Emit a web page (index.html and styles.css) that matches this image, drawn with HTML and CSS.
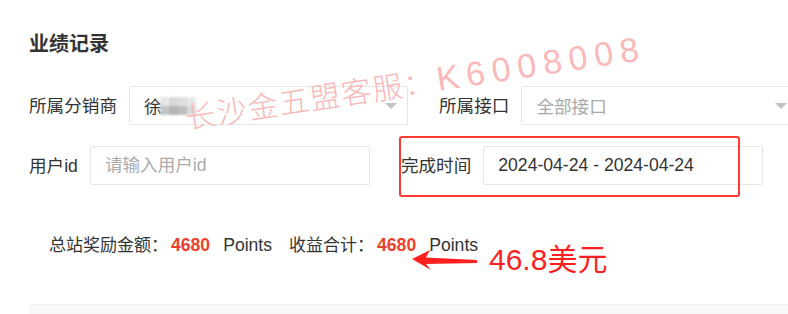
FILE: index.html
```html
<!DOCTYPE html>
<html lang="zh-CN">
<head>
<meta charset="utf-8">
<title>业绩记录</title>
<link rel="stylesheet" href="styles.css">
</head>
<body>
<div class="page">
  <h2 class="title">业绩记录</h2>

  <div class="form-row">
    <div class="item">
      <label class="lbl">所属分销商</label>
      <div class="select sel-a">
        <span class="val">徐</span>
        <span class="mosaic"><i class="m1"></i><i class="m2"></i><i class="m3"></i><i class="m4"></i><i class="m5"></i><i class="m6"></i><i class="m7"></i><i class="m8"></i></span>
        <i class="caret"></i>
      </div>
    </div>
    <div class="item">
      <label class="lbl">所属接口</label>
      <div class="select sel-b">
        <span class="ph">全部接口</span>
        <i class="caret"></i>
      </div>
    </div>
  </div>

  <div class="form-row row2">
    <div class="item">
      <label class="lbl">用户id</label>
      <input class="input" type="text" placeholder="请输入用户id">
    </div>
    <div class="item date-item">
      <label class="lbl">完成时间</label>
      <input class="input date" type="text" value="2024-04-24 - 2024-04-24">
      <div class="highlight"></div>
    </div>
  </div>

  <div class="summary">
    <span class="k">总站奖励金额：</span><b class="num">4680</b><span class="unit">Points</span>
    <span class="k k2">收益合计：</span><b class="num">4680</b><span class="unit">Points</span>
  </div>

  <div class="table-head"></div>

  <svg class="arrow" width="70" height="24" viewBox="0 0 70 24">
    <polygon points="2,10 20,1 16,8.5 67,11 67,14 16,15 21,21" fill="#ff1f1f"/>
  </svg>
  <div class="note">46.8美元</div>

  <div class="watermark"><span class="wm-cn">长沙金五盟客服：</span><span class="wm-en">K6008008</span></div>
</div>
</body>
</html>
```

FILE: styles.css
```css
html, body {
  margin: 0;
  padding: 0;
  background: #ffffff;
  overflow: hidden;
}

body {
  width: 788px;
  height: 314px;
  font-family: "Liberation Sans", "Noto Sans CJK SC", sans-serif;
  font-size: 17.6px;
  color: #333333;
}

.page {
  position: relative;
  padding: 30px 0 0 29px;
  height: 314px;
  box-sizing: border-box;
}

.title {
  margin: 0;
  font-size: 20px;
  line-height: 28px;
  font-weight: bold;
  color: #333333;
}

.form-row {
  display: flex;
  align-items: center;
  margin-top: 28px;
  white-space: nowrap;
}

.row2 {
  margin-top: 21px;
}

.item {
  display: flex;
  align-items: center;
  flex: none;
}

.item + .item {
  margin-left: 31px;
}

.lbl {
  margin-right: 12px;
  color: #333333;
  line-height: 24px;
}

.select,
.input {
  position: relative;
  display: flex;
  align-items: center;
  height: 39px;
  box-sizing: border-box;
  border: 1px solid #e6e6e6;
  border-radius: 2px;
  background: #ffffff;
  padding: 0 14px;
}

.sel-a { width: 279px; }
.sel-b { width: 277px; }

.input {
  width: 280px;
  font: inherit;
  color: #333333;
  outline: none;
}

.input::placeholder {
  color: #ababab;
}

.val {
  color: #333333;
}

.ph {
  color: #a9a9a9;
}

.caret {
  position: absolute;
  right: 10px;
  top: 50%;
  margin-top: -3px;
  width: 0;
  height: 0;
  border-top: 6px solid #c2c2c2;
  border-left: 6px solid transparent;
  border-right: 6px solid transparent;
}

.mosaic {
  display: grid;
  grid-template-columns: repeat(4, 9px);
  grid-template-rows: repeat(2, 9px);
  margin-left: -2px;
  filter: blur(1.2px);
  opacity: 0.85;
}

.mosaic i { display: block; }
.m1 { background: #e3e3e3; }
.m2 { background: #d2d2d2; }
.m3 { background: #dadada; }
.m4 { background: #e6e6e6; }
.m5 { background: #bdbdbd; }
.m6 { background: #a9a9a9; }
.m7 { background: #b4b4b4; }
.m8 { background: #d0d0d0; }

.date-item {
  position: relative;
}

.highlight {
  position: absolute;
  left: -2px;
  top: -10px;
  width: 341px;
  height: 61px;
  box-sizing: border-box;
  border: 2px solid #ff3a33;
  border-radius: 3px;
  pointer-events: none;
}

.summary {
  display: flex;
  align-items: baseline;
  margin-top: 48px;
  padding-left: 20px;
  font-size: 17px;
  line-height: 24px;
  white-space: nowrap;
}

.num {
  margin-left: 3px;
  font-size: 17.6px;
  color: #ee3f2d;
  font-weight: bold;
}

.unit {
  margin-left: 13px;
  font-size: 17.6px;
  color: #333333;
}

.k2 {
  margin-left: 17px;
}

.table-head {
  margin-top: 46px;
  height: 12px;
  background: #f8f8f8;
  border-top: 1px solid #eeeeee;
}

.arrow {
  position: absolute;
  left: 410px;
  top: 249px;
}

.note {
  position: absolute;
  left: 489px;
  top: 245px;
  font-size: 30px;
  line-height: 30px;
  color: #ff1f1f;
  white-space: nowrap;
}

.watermark {
  position: absolute;
  left: 186px;
  top: 102px;
  line-height: 30px;
  white-space: nowrap;
  color: #fab8b8;
  font-weight: 300;
  transform: rotate(-8.6deg);
  transform-origin: 0 50%;
  pointer-events: none;
}

.wm-cn {
  font-size: 30px;
  letter-spacing: 1.5px;
}

.wm-en {
  font-size: 34px;
  letter-spacing: 7px;
  margin-left: 2px;
}
```
